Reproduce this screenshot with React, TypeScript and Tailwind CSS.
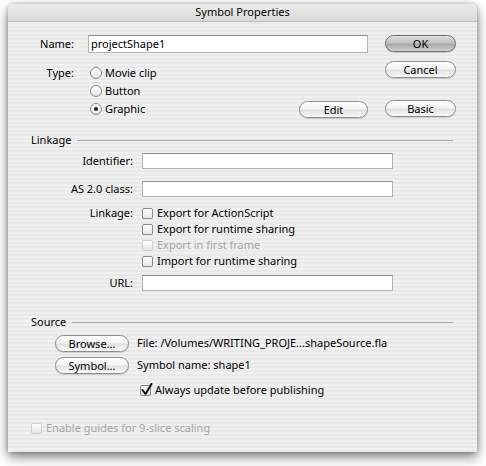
import React from "react";

const font = "font-['Lucida_Grande','Noto_Sans',sans-serif]";

function AquaButton({ label, width, primary = false }: { label: string; width: string; primary?: boolean }) {
  return (
    <div
      className={`${width} h-[17px] rounded-full border flex items-center justify-center text-[11px] leading-none text-black shadow-[0_1px_1px_rgba(0,0,0,0.15)] ${
        primary
          ? "border-[#6f6f6f] bg-[linear-gradient(to_bottom,#e0e0e0_0%,#c2c2c2_45%,#a8a8a8_55%,#d2d2d2_100%)]"
          : "border-[#8e8e8e] bg-[linear-gradient(to_bottom,#ffffff_0%,#f3f3f3_45%,#e2e2e2_55%,#f8f8f8_100%)]"
      }`}
    >
      {label}
    </div>
  );
}

function Radio({ checked = false }: { checked?: boolean }) {
  return (
    <div className="w-[12px] h-[12px] rounded-full border border-[#8a8a8a] bg-[linear-gradient(to_bottom,#ffffff,#e4e4e4)] flex items-center justify-center shrink-0">
      {checked && <div className="w-[4px] h-[4px] rounded-full bg-[#222]" />}
    </div>
  );
}

function Checkbox({ checked = false, disabled = false }: { checked?: boolean; disabled?: boolean }) {
  return (
    <div
      className={`relative w-[11px] h-[11px] rounded-[2px] border shrink-0 bg-[linear-gradient(to_bottom,#ffffff,#e6e6e6)] ${
        disabled ? "border-[#cfcfcf]" : "border-[#8a8a8a]"
      }`}
    >
      {checked && (
        <svg className="absolute left-[0px] -top-[3px]" width="12" height="13" viewBox="0 0 12 13">
          <path d="M1.5 7 L4.5 11 L10.5 1" fill="none" stroke="#111" strokeWidth="2" strokeLinecap="round" strokeLinejoin="round" />
        </svg>
      )}
    </div>
  );
}

function TextField({ width, height = "h-[16px]", value = "" }: { width: string; height?: string; value?: string }) {
  return (
    <div className={`${width} ${height} bg-white border border-[#b4b4b4] border-t-[#8e8e8e] flex items-center pl-[2px] text-[11px] text-black`}>
      {value}
    </div>
  );
}

function SectionHeader({ title }: { title: string }) {
  return (
    <div className="h-[16px] pl-[23px] pr-[24px] flex items-center text-[11px] text-black">
      <span>{title}</span>
      <div className="flex-1 ml-[6px] h-px bg-[#a8a8a8]" />
    </div>
  );
}

function FieldRow({ label, children, className = "" }: { label: string; children: React.ReactNode; className?: string }) {
  return (
    <div className={`flex items-start ${className}`}>
      <div className="w-[125px] text-right text-[11px] leading-[16px] text-black">{label}</div>
      <div className="ml-[9px]">{children}</div>
    </div>
  );
}

function CheckRow({ label, disabled = false, checked = false }: { label: string; disabled?: boolean; checked?: boolean }) {
  return (
    <div className="h-[16px] flex items-center gap-[4px]">
      <Checkbox disabled={disabled} checked={checked} />
      <span className={`text-[11px] ${disabled ? "text-[#a6a6a6]" : "text-black"}`}>{label}</span>
    </div>
  );
}

export default function App() {
  return (
    <div className={`w-[486px] h-[466px] bg-white overflow-hidden ${font}`}>
      <div className="ml-[8px] mt-[4px] w-[469px] h-[448px] rounded-t-[6px] overflow-hidden shadow-[0_5px_12px_rgba(0,0,0,0.5),0_0_4px_rgba(0,0,0,0.25)] bg-[repeating-linear-gradient(to_bottom,#f0f0f0_0px,#f0f0f0_2px,#e9e9e9_2px,#e9e9e9_4px)] flex flex-col">
        {/* Title bar */}
        <div className="h-[18px] shrink-0 bg-[linear-gradient(to_bottom,#ececec,#d9d9d9)] border-b border-[#bdbdbd] flex items-center justify-center text-[11px] text-black">
          Symbol Properties
        </div>

        {/* Top: name / type / buttons */}
        <div className="flex pt-[13px]">
          <div className="w-[360px] flex flex-col">
            <div className="flex items-center">
              <div className="w-[66px] text-right text-[11px] text-black">Name:</div>
              <div className="ml-[14px]">
                <TextField width="w-[280px]" height="h-[18px]" value="projectShape1" />
              </div>
            </div>
            <div className="flex mt-[11px]">
              <div className="w-[66px] text-right text-[11px] leading-[18px] text-black">Type:</div>
              <div className="ml-[16px] flex-1 flex flex-col">
                <div className="h-[18px] flex items-center gap-[3px] text-[11px] text-black">
                  <Radio />
                  <span>Movie clip</span>
                </div>
                <div className="h-[18px] flex items-center gap-[3px] text-[11px] text-black">
                  <Radio />
                  <span>Button</span>
                </div>
                <div className="h-[18px] flex items-center gap-[3px] text-[11px] text-black">
                  <Radio checked />
                  <span>Graphic</span>
                  <div className="ml-auto">
                    <AquaButton label="Edit" width="w-[69px]" />
                  </div>
                </div>
              </div>
            </div>
          </div>
          <div className="ml-[17px] flex flex-col">
            <AquaButton label="OK" width="w-[71px]" primary />
            <div className="mt-[9px]">
              <AquaButton label="Cancel" width="w-[71px]" />
            </div>
            <div className="mt-[22px]">
              <AquaButton label="Basic" width="w-[71px]" />
            </div>
          </div>
        </div>

        {/* Linkage */}
        <div className="mt-[14px]">
          <SectionHeader title="Linkage" />
        </div>
        <FieldRow label="Identifier:" className="mt-[5px]">
          <TextField width="w-[251px]" />
        </FieldRow>
        <FieldRow label="AS 2.0 class:" className="mt-[12px]">
          <TextField width="w-[251px]" />
        </FieldRow>
        <FieldRow label="Linkage:" className="mt-[8px]">
          <div className="flex flex-col">
            <CheckRow label="Export for ActionScript" />
            <CheckRow label="Export for runtime sharing" />
            <CheckRow label="Export in first frame" disabled />
            <CheckRow label="Import for runtime sharing" />
          </div>
        </FieldRow>
        <FieldRow label="URL:" className="mt-[6px]">
          <TextField width="w-[251px]" />
        </FieldRow>

        {/* Source */}
        <div className="mt-[23px]">
          <SectionHeader title="Source" />
        </div>
        <div className="mt-[5px] pl-[47px] flex items-center gap-[8px] text-[11px] text-black">
          <AquaButton label="Browse..." width="w-[74px]" />
          <span>File: /Volumes/WRITING_PROJE...shapeSource.fla</span>
        </div>
        <div className="mt-[5px] pl-[47px] flex items-center gap-[8px] text-[11px] text-black">
          <AquaButton label="Symbol..." width="w-[74px]" />
          <span>Symbol name: shape1</span>
        </div>
        <div className="mt-[8px] pl-[132px]">
          <CheckRow label="Always update before publishing" checked />
        </div>

        <div className="mt-[22px] pl-[23px]">
          <CheckRow label="Enable guides for 9-slice scaling" disabled />
        </div>
      </div>
    </div>
  );
}
